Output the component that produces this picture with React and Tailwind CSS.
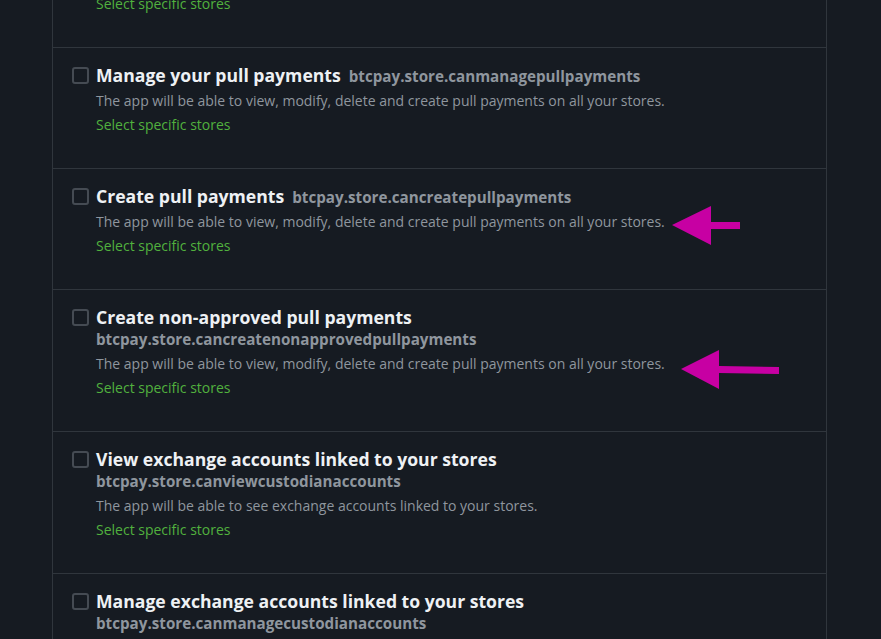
import React from 'react';

const permissions = [
  {
    title: 'View your payment requests',
    scope: 'btcpay.store.canviewpaymentrequests',
    description: 'The app will be able to view your payment requests.',
  },
  {
    title: 'Manage your pull payments',
    scope: 'btcpay.store.canmanagepullpayments',
    description: 'The app will be able to view, modify, delete and create pull payments on all your stores.',
  },
  {
    title: 'Create pull payments',
    scope: 'btcpay.store.cancreatepullpayments',
    description: 'The app will be able to view, modify, delete and create pull payments on all your stores.',
  },
  {
    title: 'Create non-approved pull payments',
    scope: 'btcpay.store.cancreatenonapprovedpullpayments',
    description: 'The app will be able to view, modify, delete and create pull payments on all your stores.',
    stacked: true,
  },
  {
    title: 'View exchange accounts linked to your stores',
    scope: 'btcpay.store.canviewcustodianaccounts',
    description: 'The app will be able to see exchange accounts linked to your stores.',
    stacked: true,
  },
  {
    title: 'Manage exchange accounts linked to your stores',
    scope: 'btcpay.store.canmanagecustodianaccounts',
    description: 'The app will be able to modify exchange accounts linked to your stores.',
    stacked: true,
  },
];

function PermissionRow({ item, first }) {
  return (
    <li className={`pl-[19px] pr-5 pt-4 pb-[31px] ${first ? '' : 'border-t border-[#30363d]'}`}>
      <div className="flex items-start gap-[7px]">
        <span className="mt-[3px] h-[17px] w-[17px] shrink-0 rounded-[3px] border-2 border-[#454b53]" />
        <div className="min-w-0">
          {item.stacked ? (
            <>
              <p className="text-[17.6px] font-bold leading-[22px] text-[#eef1f4]">{item.title}</p>
              <p className="text-[15.2px] font-bold leading-[22px] text-[#8f969e]">{item.scope}</p>
            </>
          ) : (
            <p className="flex items-baseline gap-2 leading-[22px]">
              <span className="text-[17.6px] font-bold text-[#eef1f4]">{item.title}</span>
              <span className="text-[15.2px] font-bold text-[#8f969e]">{item.scope}</span>
            </p>
          )}
          <p className="mt-[2px] text-[14px] leading-6 text-[#8f969e]">{item.description}</p>
          <a className="block text-[14px] leading-6 text-[#51b13e]">Select specific stores</a>
        </div>
      </div>
    </li>
  );
}

export default function App() {
  return (
    <div
      className="relative h-[639px] w-[881px] overflow-hidden bg-[#161b22]"
      style={{ fontFamily: '"Open Sans", "Noto Sans", sans-serif' }}
    >
      <ul className="-mt-[73px] ml-[52px] w-[775px] border-x border-[#30363d] bg-[#161b22]">
        {permissions.map((item, i) => (
          <PermissionRow key={item.scope} item={item} first={i === 0} />
        ))}
      </ul>

      <svg className="pointer-events-none absolute left-0 top-0" width="881" height="639" viewBox="0 0 881 639">
        <polygon
          fill="#c700a3"
          points="672,225 711,206 711,222 740,222 740,229 711,229 711,245"
        />
        <polygon
          fill="#c700a3"
          points="681,369 719,350 719,366 779,367 779,374 719,373 719,389"
        />
      </svg>
    </div>
  );
}
